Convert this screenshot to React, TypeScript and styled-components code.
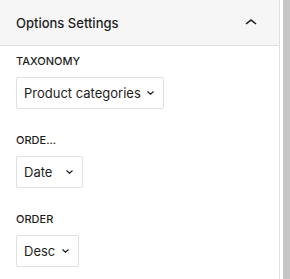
import React from 'react';
import styled, { createGlobalStyle } from 'styled-components';

const GlobalStyle = createGlobalStyle`
	html, body {
		margin: 0;
		padding: 0;
		background: #fff;
	}
	body {
		font-family: Inter, "Noto Sans", "Liberation Sans", sans-serif;
		color: #1e1e1e;
	}
`;

type Option = {
	label: string;
	value: string;
	width: number;
};

// the order-by label is clipped in the sidebar, kept as shown
const controls: Option[] = [
	{ label: 'Taxonomy', value: 'Product categories', width: 148 },
	{ label: 'Orde...', value: 'Date', width: 67 },
	{ label: 'Order', value: 'Desc', width: 63 },
];

const ChevronUp: React.FC = () => (
	<svg width="24" height="24" viewBox="0 0 24 24" aria-hidden="true">
		<path d="M6.5 12.4L12 8l5.5 4.4-.9 1.2L12 10l-4.5 3.6-1-1.2z" fill="#1e1e1e" />
	</svg>
);

const ChevronDown: React.FC = () => (
	<svg width="7" height="4" viewBox="0 0 7 4" aria-hidden="true">
		<path d="M0.5 0.5L3.5 3.2L6.5 0.5" fill="none" stroke="#1e1e1e" strokeWidth="1.2" />
	</svg>
);

const App: React.FC = () => (
	<>
		<GlobalStyle />
		<Frame>
			<Panel>
				<PanelHeader>
					<PanelTitle>Options Settings</PanelTitle>
					<ChevronUp />
				</PanelHeader>
				<PanelBody>
					{controls.map((control) => (
						<Control key={control.label}>
							<Label>{control.label}</Label>
							<Select $width={control.width}>
								<SelectValue>{control.value}</SelectValue>
								<ChevronDown />
							</Select>
						</Control>
					))}
				</PanelBody>
			</Panel>
			<ScrollTrack />
		</Frame>
	</>
);

const Frame = styled.div`
	display: flex;
	width: 290px;
	height: 279px;
	overflow: hidden;
`;

const Panel = styled.div`
	width: 279px;
	border-right: 1px solid #e0e0e0;
	flex-shrink: 0;
`;

const PanelHeader = styled.div`
	display: flex;
	align-items: center;
	justify-content: space-between;
	height: 45px;
	padding: 0 16px;
	background: #f6f6f6;
	border-bottom: 1px solid #e0e0e0;
`;

const PanelTitle = styled.div`
	font-size: 13px;
	font-weight: 500;
	color: #1e1e1e;
`;

const PanelBody = styled.div`
	display: flex;
	flex-direction: column;
	gap: 24px;
	padding: 8px 16px 0;
`;

const Control = styled.div`
	display: flex;
	flex-direction: column;
	align-items: flex-start;
`;

const Label = styled.label`
	display: block;
	font-size: 11px;
	font-weight: 500;
	line-height: 15px;
	text-transform: uppercase;
	color: #1e1e1e;
	margin-bottom: 8px;
	white-space: nowrap;
`;

const Select = styled.div<{ $width: number }>`
	display: flex;
	align-items: center;
	justify-content: space-between;
	box-sizing: border-box;
	width: ${(props) => props.$width}px;
	height: 32px;
	padding: 0 9px 0 7px;
	border: 1px solid #e0e0e0;
	border-radius: 2px;
	background: #fff;
`;

const SelectValue = styled.span`
	font-size: 13px;
	color: #1e1e1e;
	white-space: nowrap;
`;

const ScrollTrack = styled.div`
	width: 7px;
	margin-left: 3px;
	background: #c6c6c6;
	flex-shrink: 0;
`;

export default App;
